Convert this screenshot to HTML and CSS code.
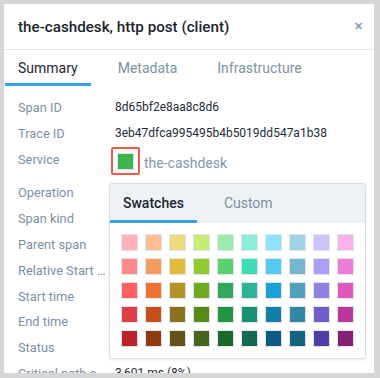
FILE: index.html
```html
<!DOCTYPE html>
<html>
<head>
<meta charset="utf-8">
<link rel="stylesheet" href="styles.css">
</head>
<body>
<div class="panel">
  <div class="header">
    <div class="title">the-cashdesk, http post (client)</div>
    <div class="close">&#x2715;</div>
  </div>
  <div class="tabs">
    <div class="tab active">Summary</div>
    <div class="tab">Metadata</div>
    <div class="tab">Infrastructure</div>
  </div>
  <div class="rows">
    <div class="row"><div class="label">Span ID</div><div class="value">8d65bf2e8aa8c8d6</div></div>
    <div class="row"><div class="label">Trace ID</div><div class="value">3eb47dfca995495b4b5019dd547a1b38</div></div>
    <div class="row service-row">
      <div class="label">Service</div>
      <div class="value service">
        <span class="swatch-btn"><span class="swatch-fill"></span></span>
        <span class="service-name">the-cashdesk</span>
        <div class="popover">
          <div class="pop-tabs">
            <div class="pop-tab active">Swatches</div>
            <div class="pop-tab">Custom</div>
          </div>
          <div class="grid">
            <span class="sw" style="background:#ffb3b8"></span>
            <span class="sw" style="background:#ffbf94"></span>
            <span class="sw" style="background:#f0d87c"></span>
            <span class="sw" style="background:#c5ee72"></span>
            <span class="sw" style="background:#9debab"></span>
            <span class="sw" style="background:#8aefd9"></span>
            <span class="sw" style="background:#8fe2fb"></span>
            <span class="sw" style="background:#a0d3e6"></span>
            <span class="sw" style="background:#cbc4fd"></span>
            <span class="sw" style="background:#fdb1ec"></span>

            <span class="sw" style="background:#ff8a8b"></span>
            <span class="sw" style="background:#f59b5d"></span>
            <span class="sw" style="background:#e0bc3d"></span>
            <span class="sw" style="background:#92ca2f"></span>
            <span class="sw" style="background:#57d16e"></span>
            <span class="sw" style="background:#3ddcb9"></span>
            <span class="sw" style="background:#55c9ef"></span>
            <span class="sw" style="background:#74b8cf"></span>
            <span class="sw" style="background:#aa9ef7"></span>
            <span class="sw" style="background:#ef7cd6"></span>

            <span class="sw" style="background:#ff5f60"></span>
            <span class="sw" style="background:#ef7230"></span>
            <span class="sw" style="background:#b39323"></span>
            <span class="sw" style="background:#6dab1d"></span>
            <span class="sw" style="background:#30a75b"></span>
            <span class="sw" style="background:#2db496"></span>
            <span class="sw" style="background:#1aa2d6"></span>
            <span class="sw" style="background:#52a1bc"></span>
            <span class="sw" style="background:#8f80e3"></span>
            <span class="sw" style="background:#de58bd"></span>

            <span class="sw" style="background:#de3f46"></span>
            <span class="sw" style="background:#c24f1c"></span>
            <span class="sw" style="background:#8a711e"></span>
            <span class="sw" style="background:#578a15"></span>
            <span class="sw" style="background:#229540"></span>
            <span class="sw" style="background:#189072"></span>
            <span class="sw" style="background:#137ea8"></span>
            <span class="sw" style="background:#3188a5"></span>
            <span class="sw" style="background:#715dca"></span>
            <span class="sw" style="background:#b8389f"></span>

            <span class="sw" style="background:#bd2229"></span>
            <span class="sw" style="background:#8f3a10"></span>
            <span class="sw" style="background:#645117"></span>
            <span class="sw" style="background:#46661f"></span>
            <span class="sw" style="background:#1a6a2b"></span>
            <span class="sw" style="background:#156952"></span>
            <span class="sw" style="background:#0d5a82"></span>
            <span class="sw" style="background:#116581"></span>
            <span class="sw" style="background:#4e3fa6"></span>
            <span class="sw" style="background:#852074"></span>
          </div>
        </div>
      </div>
    </div>
    <div class="row"><div class="label">Operation</div><div class="value"></div></div>
    <div class="row"><div class="label">Span kind</div><div class="value"></div></div>
    <div class="row"><div class="label">Parent span</div><div class="value"></div></div>
    <div class="row"><div class="label">Relative Start time</div><div class="value"></div></div>
    <div class="row"><div class="label">Start time</div><div class="value"></div></div>
    <div class="row"><div class="label">End time</div><div class="value"></div></div>
    <div class="row"><div class="label">Status</div><div class="value"></div></div>
    <div class="row"><div class="label">Critical path contribution</div><div class="value">3,601 ms (8%)</div></div>
  </div>
</div>
</body>
</html>
```
FILE: styles.css
```css
html, body {
  margin: 0;
  padding: 0;
}
body {
  background: #d6d6d6;
  padding: 4px 6px 5px 4px;
  font-family: Roboto, "Liberation Sans", sans-serif;
}
.panel {
  background: #ffffff;
  height: 369px;
  overflow: hidden;
  position: relative;
}
.header {
  height: 45px;
  display: flex;
  align-items: center;
  justify-content: space-between;
  padding: 0 11px 0 14px;
  border-bottom: 1px solid #e4e8ec;
}
.title {
  font-size: 15.2px;
  font-weight: 500;
  color: #1d2532;
  padding-top: 1px;
}
.close {
  font-size: 11px;
  font-weight: 700;
  color: #8b9cb0;
}
.tabs {
  display: flex;
  gap: 14px;
  padding-left: 1px;
  height: 36px;
}
.tab {
  padding: 0 13px;
  font-size: 14px;
  color: #7d90a6;
  line-height: 36px;
  border-bottom: 3px solid transparent;
  box-sizing: border-box;
}
.tab.active {
  color: #1d2532;
  border-bottom-color: #3aa0e4;
}
.rows {
  padding: 9px 0 0 14px;
}
.row {
  display: flex;
  align-items: flex-start;
  gap: 8px;
}
.label {
  width: 89px;
  flex: none;
  font-size: 12.8px;
  line-height: 25.8px;
  color: #7b8fa7;
  white-space: nowrap;
  overflow: hidden;
  text-overflow: ellipsis;
}
.value {
  font-size: 12px;
  line-height: 25.8px;
  color: #222b38;
  white-space: nowrap;
}
.service-row {
  margin-bottom: 4px;
}
.service {
  position: relative;
  display: flex;
  align-items: center;
  margin-left: -4px;
}
.swatch-btn {
  width: 25px;
  height: 24px;
  border: 2px solid #ea5a46;
  border-radius: 2px;
  display: flex;
  align-items: center;
  justify-content: center;
}
.swatch-fill {
  width: 15px;
  height: 15px;
  background: #3cb44b;
  border: 1px solid #dfe3e8;
}
.service-name {
  margin-left: 4px;
  font-size: 14px;
  color: #8597ad;
  padding-top: 4px;
}
.popover {
  position: absolute;
  left: -2px;
  top: 36px;
  width: 255px;
  background: #ffffff;
  border: 1px solid #d6dee6;
  border-radius: 3px;
  box-shadow: 0 1px 3px rgba(0, 0, 0, 0.08);
  z-index: 2;
}
.pop-tabs {
  display: flex;
  gap: 14px;
  height: 39px;
  background: #eff2f4;
}
.pop-tab {
  padding: 0 13px;
  font-size: 14px;
  line-height: 38px;
  color: #7d90a6;
  border-bottom: 3px solid transparent;
  box-sizing: border-box;
}
.pop-tab.active {
  color: #1d2532;
  font-weight: 500;
  border-bottom-color: #3aa0e4;
}
.grid {
  display: grid;
  grid-template-columns: repeat(10, 17px);
  gap: 7px;
  padding: 11px;
}
.sw {
  width: 15px;
  height: 15px;
  border: 1px solid #e0e4ea;
  border-radius: 1px;
}
```
